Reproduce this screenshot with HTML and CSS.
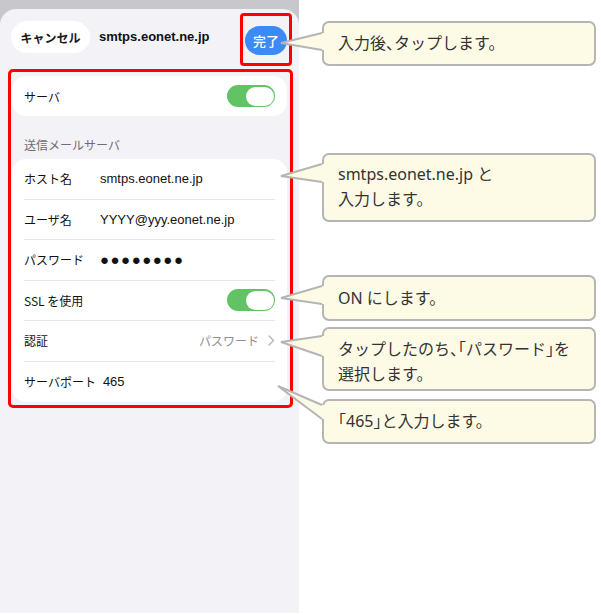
FILE: index.html
```html
<!DOCTYPE html>
<html lang="ja">
<head>
<meta charset="utf-8">
<title>送信メールサーバ設定</title>
<link rel="stylesheet" href="styles.css">
</head>
<body>
<div class="page">
  <div class="phone">
    <div class="sheet">
      <div class="topbar">
        <span class="cancel">キャンセル</span>
        <span class="title">smtps.eonet.ne.jp</span>
        <span class="done-wrap"><span class="done">完了</span><span class="mark"></span></span>
      </div>
      <div class="frame">
        <div class="card">
          <div class="row single"><span class="label">サーバ</span><span class="toggle"><span class="knob"></span></span></div>
        </div>
        <div class="section">送信メールサーバ</div>
        <div class="card list">
          <div class="row"><span class="label">ホスト名</span><span class="value">smtps.eonet.ne.jp</span></div>
          <div class="row"><span class="label">ユーザ名</span><span class="value">YYYY@yyy.eonet.ne.jp</span></div>
          <div class="row"><span class="label">パスワード</span><span class="value dots">●●●●●●●●</span></div>
          <div class="row"><span class="label">SSL を使用</span><span class="toggle"><span class="knob"></span></span></div>
          <div class="row"><span class="label">認証</span><span class="detail">パスワード<svg class="chev" width="7" height="11" viewBox="0 0 7 11"><polyline points="1,1 5.5,5.5 1,10" fill="none" stroke="#b4b4b9" stroke-width="1.4" stroke-linecap="round" stroke-linejoin="round"/></svg></span></div>
          <div class="row"><span class="label">サーバポート</span><span class="value port">465</span></div>
        </div>
      </div>
    </div>
  </div>
  <div class="notes">
    <div class="note n1">
      <svg class="tail" width="1" height="1"><polygon points="-41,22 0,12 5,12 5,29 0,29" fill="#fdfbe6"/><polyline points="0,12 -41,22 0,29" fill="none" stroke="#b5b5b5" stroke-width="2"/></svg>
      <p>入力後、タップします。</p>
    </div>
    <div class="note n2">
      <svg class="tail" width="1" height="1"><polygon points="-41,23 0,11 5,11 5,29 0,29" fill="#fdfbe6"/><polyline points="0,11 -41,23 0,29" fill="none" stroke="#b5b5b5" stroke-width="2"/></svg>
      <p>smtps.eonet.ne.jp と<br>入力します。</p>
    </div>
    <div class="note n3">
      <svg class="tail" width="1" height="1"><polygon points="-41,23 0,11 5,11 5,29 0,29" fill="#fdfbe6"/><polyline points="0,11 -41,23 0,29" fill="none" stroke="#b5b5b5" stroke-width="2"/></svg>
      <p>ON にします。</p>
    </div>
    <div class="note n4">
      <svg class="tail" width="1" height="1"><polygon points="-41,15 0,9 5,9 5,29 0,29" fill="#fdfbe6"/><polyline points="0,9 -41,15 0,29" fill="none" stroke="#b5b5b5" stroke-width="2"/></svg>
      <p>タップしたのち、「パスワード」を<br>選択します。</p>
    </div>
    <div class="note n5">
      <svg class="tail" width="1" height="1"><polygon points="-44,-13 0,6 5,6 5,20 0,20" fill="#fdfbe6"/><polyline points="0,6 -44,-13 0,20" fill="none" stroke="#b5b5b5" stroke-width="2"/></svg>
      <p>「465」と入力します。</p>
    </div>
  </div>
</div>
</body>
</html>
```

FILE: styles.css
```css
html, body {
  margin: 0;
  padding: 0;
  background: #ffffff;
}

.page {
  display: flex;
  width: 601px;
  height: 615px;
  overflow: hidden;
}

/* ---------- phone ---------- */
.phone {
  width: 299px;
  height: 613px;
  flex: none;
  box-sizing: border-box;
  padding-top: 9px;
  background: #c8c8cc;
  font-family: "Liberation Sans", "Noto Sans CJK JP", sans-serif;
  color: #111111;
}

.sheet {
  height: 100%;
  background: #f2f2f7;
  border-radius: 16px 16px 0 0;
}

.topbar {
  display: flex;
  align-items: flex-start;
  padding: 12px 12px 0 11px;
  height: 32px;
}

.cancel {
  width: 79px;
  height: 32px;
  border-radius: 16px;
  background: #ffffff;
  display: flex;
  align-items: center;
  justify-content: center;
  font-family: "Noto Sans CJK JP", sans-serif;
  font-size: 12px;
  font-weight: 700;
  color: #1a1a1a;
}

.title {
  margin-left: 9px;
  line-height: 32px;
  font-size: 13px;
  font-weight: 700;
  color: #111111;
}

.done-wrap {
  margin-left: auto;
  margin-top: 5px;
  position: relative;
  display: block;
}

.done {
  display: flex;
  align-items: center;
  justify-content: center;
  width: 42px;
  height: 29px;
  border-radius: 15px;
  background: #3b8af5;
  color: #ffffff;
  font-family: "Noto Sans CJK JP", sans-serif;
  font-size: 13px;
  font-weight: 500;
}

.mark {
  position: absolute;
  left: -5px;
  right: -5px;
  top: -13px;
  bottom: -11px;
  border: 3px solid #ff0000;
  border-radius: 4px;
}

.frame {
  margin: 16px 6px 0 8px;
  border: 3px solid #ff0000;
  border-radius: 5px;
  padding: 4px 3px 3px 1px;
}

.card {
  background: #ffffff;
  border-radius: 14px;
}

.row {
  display: flex;
  align-items: center;
  margin: 0 12px;
  height: 40px;
  box-sizing: border-box;
}

.list .row {
  height: 40.5px;
  border-bottom: 1px solid #e6e6eb;
}

.list .row:last-child {
  border-bottom: none;
}

.label {
  min-width: 70px;
  margin-right: 6px;
  font-family: "Noto Sans CJK JP", sans-serif;
  font-size: 12px;
  color: #111111;
  white-space: nowrap;
}

.value {
  font-size: 13px;
  color: #111111;
}

.dots {
  font-size: 15px;
  letter-spacing: 1.5px;
}

.port {
  margin-left: 1px;
}

.toggle {
  margin-left: auto;
  width: 48px;
  height: 22px;
  box-sizing: border-box;
  border-radius: 11px;
  background: #62c364;
  display: flex;
  align-items: center;
  justify-content: flex-end;
  padding-right: 1.5px;
}

.knob {
  width: 28px;
  height: 19px;
  border-radius: 10px;
  background: #ffffff;
}

.detail {
  margin-left: auto;
  display: flex;
  align-items: center;
  gap: 9px;
  font-family: "Noto Sans CJK JP", sans-serif;
  font-size: 12px;
  color: #8e8e93;
}

.chev {
  display: block;
}

.section {
  height: 43px;
  box-sizing: border-box;
  display: flex;
  align-items: flex-end;
  padding: 0 0 6px 12px;
  font-family: "Noto Sans CJK JP", sans-serif;
  font-size: 12px;
  line-height: 16px;
  color: #6d6d72;
}

/* ---------- notes ---------- */
.notes {
  display: flex;
  flex-direction: column;
  padding-left: 23px;
}

.note {
  position: relative;
  width: 274px;
  box-sizing: border-box;
  border: 2px solid #b5b5b5;
  border-radius: 7px;
  background: #fdfbe6;
  display: flex;
  align-items: center;
  padding-left: 14px;
  font-family: "Noto Sans", "Noto Sans CJK JP", sans-serif;
  font-size: 16px;
  font-feature-settings: "halt";
  line-height: 25px;
  color: #333333;
}

.note p {
  margin: 0;
}

.tail {
  position: absolute;
  top: -2px;
  left: -2px;
  overflow: visible;
}

.n1 { margin-top: 21px; height: 45px; }
.n2 { margin-top: 87px; height: 69px; padding-bottom: 1px; }
.n3 { margin-top: 53px; height: 46px; }
.n4 { margin-top: 6px; height: 64px; padding-top: 6px; }
.n5 { margin-top: 8px; height: 45px; }
```
